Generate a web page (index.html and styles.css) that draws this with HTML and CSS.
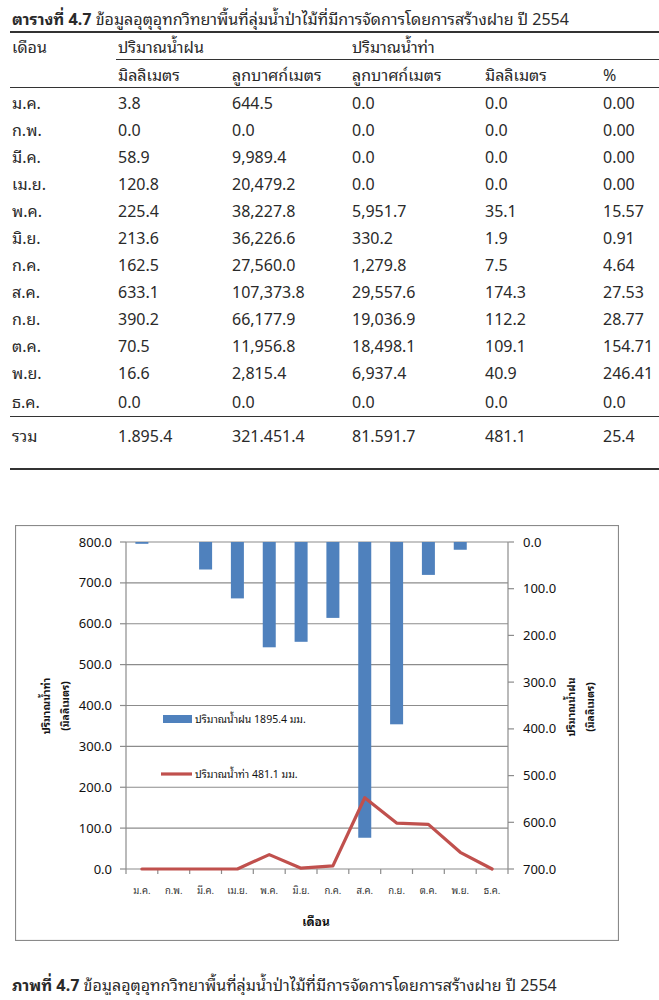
FILE: index.html
```html
<!DOCTYPE html>
<html lang="th">
<head>
<meta charset="utf-8">
<link rel="stylesheet" href="styles.css">
</head>
<body>
<div class="page">
  <p class="title"><b>ตารางที่ 4.7</b> ข้อมูลอุตุอุทกวิทยาพื้นที่ลุ่มน้ำป่าไม้ที่มีการจัดการโดยการสร้างฝาย ปี 2554</p>
  <table class="data">
    <colgroup>
      <col class="c1"><col class="c2"><col class="c3"><col class="c4"><col class="c5"><col class="c6">
    </colgroup>
    <thead>
      <tr class="h1">
        <th>เดือน</th>
        <th class="ul" colspan="2">ปริมาณน้ำฝน</th>
        <th class="ul" colspan="3">ปริมาณน้ำท่า</th>
      </tr>
      <tr class="h2">
        <th></th>
        <th>มิลลิเมตร</th>
        <th>ลูกบาศก์เมตร</th>
        <th>ลูกบาศก์เมตร</th>
        <th>มิลลิเมตร</th>
        <th>%</th>
      </tr>
    </thead>
    <tbody>
      <tr><td>ม.ค.</td><td>3.8</td><td>644.5</td><td>0.0</td><td>0.0</td><td>0.00</td></tr>
      <tr><td>ก.พ.</td><td>0.0</td><td>0.0</td><td>0.0</td><td>0.0</td><td>0.00</td></tr>
      <tr><td>มี.ค.</td><td>58.9</td><td>9,989.4</td><td>0.0</td><td>0.0</td><td>0.00</td></tr>
      <tr><td>เม.ย.</td><td>120.8</td><td>20,479.2</td><td>0.0</td><td>0.0</td><td>0.00</td></tr>
      <tr><td>พ.ค.</td><td>225.4</td><td>38,227.8</td><td>5,951.7</td><td>35.1</td><td>15.57</td></tr>
      <tr><td>มิ.ย.</td><td>213.6</td><td>36,226.6</td><td>330.2</td><td>1.9</td><td>0.91</td></tr>
      <tr><td>ก.ค.</td><td>162.5</td><td>27,560.0</td><td>1,279.8</td><td>7.5</td><td>4.64</td></tr>
      <tr><td>ส.ค.</td><td>633.1</td><td>107,373.8</td><td>29,557.6</td><td>174.3</td><td>27.53</td></tr>
      <tr><td>ก.ย.</td><td>390.2</td><td>66,177.9</td><td>19,036.9</td><td>112.2</td><td>28.77</td></tr>
      <tr><td>ต.ค.</td><td>70.5</td><td>11,956.8</td><td>18,498.1</td><td>109.1</td><td>154.71</td></tr>
      <tr><td>พ.ย.</td><td>16.6</td><td>2,815.4</td><td>6,937.4</td><td>40.9</td><td>246.41</td></tr>
      <tr class="last"><td>ธ.ค.</td><td>0.0</td><td>0.0</td><td>0.0</td><td>0.0</td><td>0.0</td></tr>
      <tr class="total"><td>รวม</td><td>1.895.4</td><td>321.451.4</td><td>81.591.7</td><td>481.1</td><td>25.4</td></tr>
    </tbody>
  </table>

  <figure class="chart">
    <svg width="604" height="416" viewBox="0 0 604 416" xmlns="http://www.w3.org/2000/svg">
      <rect x="0.5" y="0.5" width="603" height="415" fill="#fff" stroke="#8a8a8a" stroke-width="1.2"/>
      <g stroke="#8c8c8c" stroke-width="1.2">
        <line x1="111" y1="17" x2="493" y2="17"/>
        <line x1="111" y1="57.9" x2="493" y2="57.9"/>
        <line x1="111" y1="98.75" x2="493" y2="98.75"/>
        <line x1="111" y1="139.6" x2="493" y2="139.6"/>
        <line x1="111" y1="180.5" x2="493" y2="180.5"/>
        <line x1="111" y1="221.4" x2="493" y2="221.4"/>
        <line x1="111" y1="262.25" x2="493" y2="262.25"/>
        <line x1="111" y1="303.1" x2="493" y2="303.1"/>
        <line x1="111" y1="344" x2="493" y2="344"/>
        <line x1="111" y1="17" x2="111" y2="344"/>
        <line x1="493" y1="17" x2="493" y2="344"/>
        <line x1="105" y1="17" x2="111" y2="17"/>
        <line x1="105" y1="57.9" x2="111" y2="57.9"/>
        <line x1="105" y1="98.75" x2="111" y2="98.75"/>
        <line x1="105" y1="139.6" x2="111" y2="139.6"/>
        <line x1="105" y1="180.5" x2="111" y2="180.5"/>
        <line x1="105" y1="221.4" x2="111" y2="221.4"/>
        <line x1="105" y1="262.25" x2="111" y2="262.25"/>
        <line x1="105" y1="303.1" x2="111" y2="303.1"/>
        <line x1="105" y1="344" x2="111" y2="344"/>
        <line x1="493" y1="17" x2="499" y2="17"/>
        <line x1="493" y1="63.7" x2="499" y2="63.7"/>
        <line x1="493" y1="110.4" x2="499" y2="110.4"/>
        <line x1="493" y1="157.1" x2="499" y2="157.1"/>
        <line x1="493" y1="203.9" x2="499" y2="203.9"/>
        <line x1="493" y1="250.6" x2="499" y2="250.6"/>
        <line x1="493" y1="297.3" x2="499" y2="297.3"/>
        <line x1="493" y1="344" x2="499" y2="344"/>
        <line x1="111" y1="344" x2="111" y2="349"/>
        <line x1="142.8" y1="344" x2="142.8" y2="349"/>
        <line x1="174.7" y1="344" x2="174.7" y2="349"/>
        <line x1="206.5" y1="344" x2="206.5" y2="349"/>
        <line x1="238.3" y1="344" x2="238.3" y2="349"/>
        <line x1="270.2" y1="344" x2="270.2" y2="349"/>
        <line x1="302" y1="344" x2="302" y2="349"/>
        <line x1="333.8" y1="344" x2="333.8" y2="349"/>
        <line x1="365.7" y1="344" x2="365.7" y2="349"/>
        <line x1="397.5" y1="344" x2="397.5" y2="349"/>
        <line x1="429.3" y1="344" x2="429.3" y2="349"/>
        <line x1="461.2" y1="344" x2="461.2" y2="349"/>
        <line x1="493" y1="344" x2="493" y2="349"/>
      </g>
      <g fill="#4f81bd">
        <rect x="120.4" y="17" width="13" height="1.8"/>
        <rect x="184.1" y="17" width="13" height="27.5"/>
        <rect x="215.9" y="17" width="13" height="56.4"/>
        <rect x="247.75" y="17" width="13" height="105.3"/>
        <rect x="279.6" y="17" width="13" height="99.8"/>
        <rect x="311.4" y="17" width="13" height="75.9"/>
        <rect x="343.25" y="17" width="13" height="295.75"/>
        <rect x="375.1" y="17" width="13" height="182.3"/>
        <rect x="406.9" y="17" width="13" height="32.9"/>
        <rect x="438.75" y="17" width="13" height="7.75"/>
      </g>
      <polyline fill="none" stroke="#c0504d" stroke-width="3.2" stroke-linejoin="round" stroke-linecap="round"
        points="126.9,344 158.75,344 190.6,344 222.4,344 254.25,329.65 286.1,343.2 317.9,340.9 349.75,272.75 381.6,298.1 413.4,299.4 445.25,327.3 477.1,344"/>
      <g class="tick-l" text-anchor="end">
        <text x="97" y="21.5">800.0</text>
        <text x="97" y="62.4">700.0</text>
        <text x="97" y="103.25">600.0</text>
        <text x="97" y="144.1">500.0</text>
        <text x="97" y="185">400.0</text>
        <text x="97" y="225.9">300.0</text>
        <text x="97" y="266.75">200.0</text>
        <text x="97" y="307.6">100.0</text>
        <text x="97" y="348.5">0.0</text>
      </g>
      <g class="tick-r">
        <text x="508" y="21.5">0.0</text>
        <text x="508" y="68.2">100.0</text>
        <text x="508" y="114.9">200.0</text>
        <text x="508" y="161.6">300.0</text>
        <text x="508" y="208.4">400.0</text>
        <text x="508" y="255.1">500.0</text>
        <text x="508" y="301.8">600.0</text>
        <text x="508" y="348.5">700.0</text>
      </g>
      <g class="month" text-anchor="middle">
        <text x="126.9" y="369">ม.ค.</text>
        <text x="158.75" y="369">ก.พ.</text>
        <text x="190.6" y="369">มี.ค.</text>
        <text x="222.4" y="369">เม.ย.</text>
        <text x="254.25" y="369">พ.ค.</text>
        <text x="286.1" y="369">มิ.ย.</text>
        <text x="317.9" y="369">ก.ค.</text>
        <text x="349.75" y="369">ส.ค.</text>
        <text x="381.6" y="369">ก.ย.</text>
        <text x="413.4" y="369">ต.ค.</text>
        <text x="445.25" y="369">พ.ย.</text>
        <text x="477.1" y="369">ธ.ค.</text>
      </g>
      <text class="xtitle" x="301" y="401" text-anchor="middle">เดือน</text>
      <g class="ytitle" text-anchor="middle">
        <text transform="translate(35 181) rotate(-90)">ปริมาณน้ำท่า</text>
        <text transform="translate(54 181) rotate(-90)">(มิลลิเมตร)</text>
        <text transform="translate(560 182) rotate(-90)">ปริมาณน้ำฝน</text>
        <text transform="translate(579 182) rotate(-90)">(มิลลิเมตร)</text>
      </g>
      <rect x="148" y="190" width="29" height="8" fill="#4f81bd"/>
      <text class="legend" x="180" y="198">ปริมาณน้ำฝน 1895.4 มม.</text>
      <line x1="146" y1="249" x2="177" y2="249" stroke="#c0504d" stroke-width="3.2"/>
      <text class="legend" x="180" y="253">ปริมาณน้ำท่า 481.1 มม.</text>
    </svg>
  </figure>

  <p class="caption"><b>ภาพที่ 4.7</b> ข้อมูลอุตุอุทกวิทยาพื้นที่ลุ่มน้ำป่าไม้ที่มีการจัดการโดยการสร้างฝาย ปี 2554</p>
</div>
</body>
</html>
```

FILE: styles.css
```css
html, body {
  margin: 0;
  padding: 0;
  background: #fff;
}

body {
  font-family: "Noto Sans Thai Looped", "Tahoma", "Noto Sans Thai", "Leelawadee UI", "Garuda", "Loma", "Noto Sans", "DejaVu Sans", sans-serif;
  color: #2a2a2a;
}

.page {
  padding: 8px 0 0 10px;
}

.title {
  margin: 0 0 3px 2px;
  font-size: 16px;
  line-height: 20px;
  white-space: nowrap;
}

.title b {
  font-weight: bold;
}

.data {
  width: 649px;
  border-collapse: collapse;
  table-layout: fixed;
  font-size: 16px;
  border-top: 2px solid #333;
}

.c1 { width: 106px; }
.c2 { width: 114px; }
.c3 { width: 120px; }
.c4 { width: 133px; }
.c5 { width: 118px; }
.c6 { width: 58px; }

.data th,
.data td {
  padding: 0 0 0 2px;
  text-align: left;
  font-weight: normal;
  white-space: nowrap;
  vertical-align: middle;
}

.data .h1 th {
  height: 21px;
}

.data .h1 th.ul {
  border-bottom: 1px solid #333;
}

.data .h2 th {
  height: 27px;
  border-bottom: 1.5px solid #333;
}

.data tbody td {
  height: 27px;
}

.data tr.last td {
  height: 31px;
  border-bottom: 1px solid #333;
}

.data tr.total td {
  height: 46px;
  vertical-align: top;
  padding-top: 5px;
  border-bottom: 2px solid #333;
}

.chart {
  margin: 55px 0 0 5px;
  width: 604px;
  height: 416px;
}

.chart svg {
  display: block;
}

.chart text {
  font-family: "Noto Sans Thai Looped", "Tahoma", "Noto Sans Thai", "Leelawadee UI", "Garuda", "Loma", "Noto Sans", "DejaVu Sans", sans-serif;
  fill: #111;
}

.tick-l text,
.tick-r text {
  font-size: 13px;
}

.month text {
  font-size: 9.5px;
  fill: #333;
}

.xtitle {
  font-size: 12px;
  font-weight: bold;
}

.ytitle text {
  font-size: 10.5px;
  font-weight: bold;
}

.legend {
  font-size: 10.5px;
}

.caption {
  margin: 32px 0 0 2px;
  font-size: 16px;
  line-height: 22px;
  white-space: nowrap;
}
```
